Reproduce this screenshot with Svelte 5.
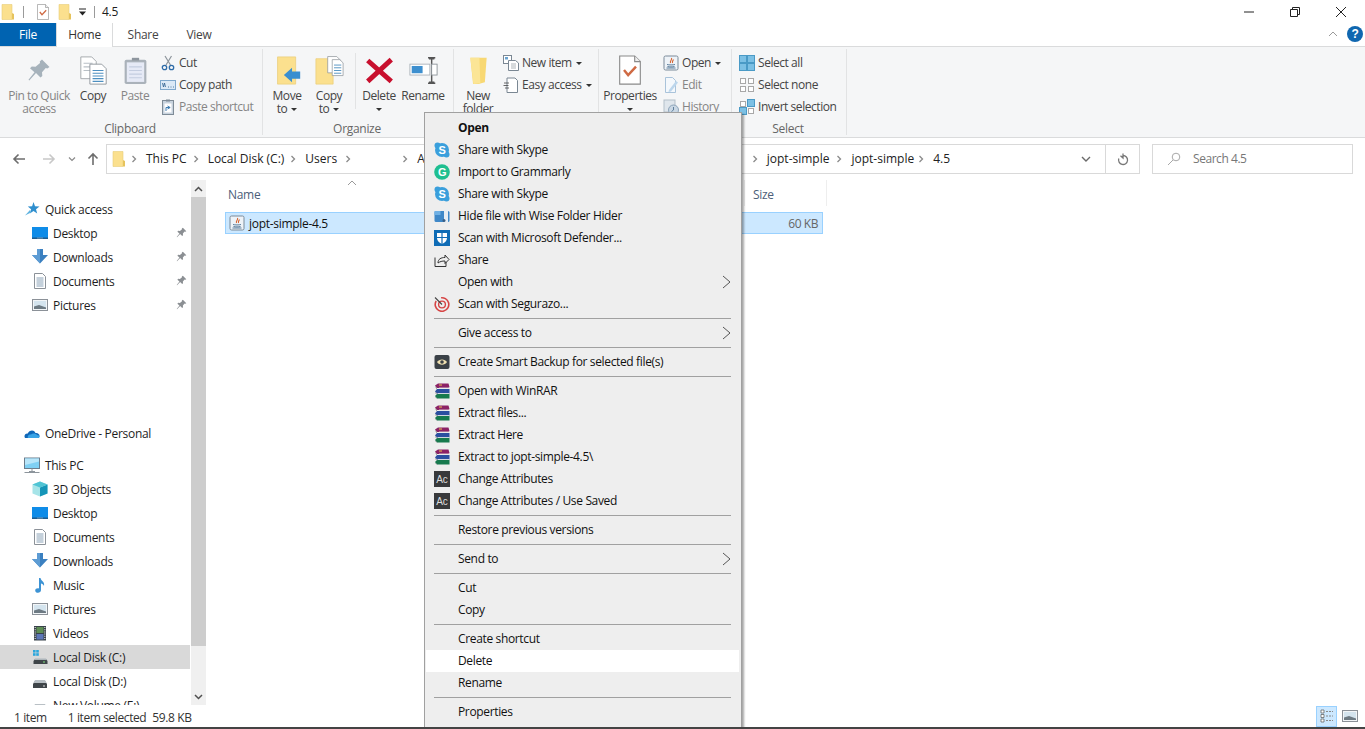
<script>
	const quick = [
		{ label: 'Desktop', icon: 'desktop' },
		{ label: 'Downloads', icon: 'download' },
		{ label: 'Documents', icon: 'docs' },
		{ label: 'Pictures', icon: 'pics' }
	]
	const pc = [
		{ label: '3D Objects', icon: 'cube' },
		{ label: 'Desktop', icon: 'desktop' },
		{ label: 'Documents', icon: 'docs' },
		{ label: 'Downloads', icon: 'download' },
		{ label: 'Music', icon: 'music' },
		{ label: 'Pictures', icon: 'pics' },
		{ label: 'Videos', icon: 'videos' },
		{ label: 'Local Disk (C:)', icon: 'diskc', selected: true },
		{ label: 'Local Disk (D:)', icon: 'disk' },
		{ label: 'New Volume (E:)', icon: 'disk' }
	]
	const menu = [
		{ label: 'Open', bold: true },
		{ label: 'Share with Skype', icon: 'skype' },
		{ label: 'Import to Grammarly', icon: 'grammarly' },
		{ label: 'Share with Skype', icon: 'skype' },
		{ label: 'Hide file with Wise Folder Hider', icon: 'wise' },
		{ label: 'Scan with Microsoft Defender...', icon: 'defender' },
		{ label: 'Share', icon: 'share' },
		{ label: 'Open with', arrow: true },
		{ label: 'Scan with Segurazo...', icon: 'segurazo' },
		{ sep: true },
		{ label: 'Give access to', arrow: true },
		{ sep: true },
		{ label: 'Create Smart Backup for selected file(s)', icon: 'backup' },
		{ sep: true },
		{ label: 'Open with WinRAR', icon: 'rar' },
		{ label: 'Extract files...', icon: 'rar' },
		{ label: 'Extract Here', icon: 'rar' },
		{ label: 'Extract to jopt-simple-4.5\\', icon: 'rar' },
		{ label: 'Change Attributes', icon: 'ac' },
		{ label: 'Change Attributes / Use Saved', icon: 'ac' },
		{ sep: true },
		{ label: 'Restore previous versions' },
		{ sep: true },
		{ label: 'Send to', arrow: true },
		{ sep: true },
		{ label: 'Cut' },
		{ label: 'Copy' },
		{ sep: true },
		{ label: 'Create shortcut' },
		{ label: 'Delete', hover: true },
		{ label: 'Rename' },
		{ sep: true },
		{ label: 'Properties' }
	]
</script>

{#snippet icon(name, size = 16)}
	<svg width={size} height={size} viewBox="0 0 16 16" class="ico">
		{#if name === 'folder'}
			<path d="M2 .5h10v15H2z" fill="#fbe08e" stroke="#e8cc78" stroke-width=".6"/>
			<path d="M12 9l2 1v5.500h-2z" fill="#e6c35c"/>
		{:else if name === 'checkdoc'}
			<path d="M2.500 .5h8l3 3v12h-11z" fill="#fff" stroke="#8a8a8a" stroke-width=".6"/>
			<path d="M10.500 .5v3h3" fill="#eee" stroke="#8a8a8a" stroke-width=".6"/>
			<path d="M4.800 8l2.200 2.700 4.200-4.500" fill="none" stroke="#cf6a44" stroke-width="1.300"/>
		{:else if name === 'pin'}
			<path d="M10 1l5 5-1.500 1-1-.3-2.500 2.800.2 2.500-1.200 1L6 10l-4.500 5L1 14.500 5 9.500 2 6.800l1.200-1.200 2.500.2 3-2.500-.2-1z" fill="#a6b2bb"/>
		{:else if name === 'pinsmall'}
			<path d="M10 1l5 5-1.500 1-1-.3-2.500 2.800.2 2.500-1.200 1L6 10l-4.500 5L1 14.500 5 9.500 2 6.800l1.200-1.200 2.500.2 3-2.500-.2-1z" fill="#8b8f93"/>
		{:else if name === 'copy'}
			<path d="M1 .5h6l2.500 2.500v9.500H1z" fill="#fff" stroke="#a0a4a8" stroke-width=".5"/>
			<path d="M2.500 4h5M2.500 6h5M2.500 8h5" stroke="#b9c0c6" stroke-width=".6"/>
			<path d="M6 4.500h6.500l2.500 2.500v8.500H6z" fill="#fff" stroke="#8d949a" stroke-width=".5"/>
			<path d="M7.500 8h6M7.500 9.500h6M7.500 11h6M7.500 12.500h6M7.500 14h6" stroke="#4d8fc0" stroke-width=".6"/>
		{:else if name === 'paste'}
			<rect x="2" y="2" width="12" height="13.500" rx="1" fill="#aab2ba"/>
			<rect x="3.200" y="3.500" width="9.600" height="10.800" fill="#e6eaf6"/>
			<path d="M4.500 6h7M4.500 8h7M4.500 10h7M4.500 12h7" stroke="#c4cde0" stroke-width=".6"/>
			<path d="M6 2.500h4V1H6z" fill="#8e969e"/>
		{:else if name === 'scissors'}
			<path d="M5 1l5.500 9M11.500 1L6 10" stroke="#8d959c" stroke-width="1.200"/>
			<circle cx="4.500" cy="12.500" r="2.200" fill="none" stroke="#2f6ca8" stroke-width="1.300"/>
			<circle cx="11.500" cy="12.500" r="2.200" fill="none" stroke="#2f6ca8" stroke-width="1.300"/>
		{:else if name === 'copypath'}
			<rect x=".5" y="3.500" width="15" height="9" fill="#dbe9f6" stroke="#7fa8cc"/>
			<path d="M2.500 6l1 4 1-4 1 4M8 10h1M10.500 10h1M13 10h1" stroke="#2e5f8e" fill="none" stroke-width=".8"/>
		{:else if name === 'pasteshortcut'}
			<rect x="2.500" y="1.500" width="11" height="14" fill="#c8d3de" stroke="#7e8b97"/>
			<rect x="4.500" y="4.500" width="7" height="9" fill="#fff"/>
			<path d="M6 12V8.500h4M7.500 7l2.700 1.500L7.500 10" fill="none" stroke="#3f7db2"/>
			<rect x="6" y=".5" width="4" height="2" fill="#7e8b97"/>
		{:else if name === 'moveto'}
			<path d="M2.500 .5h10v15H2.500z" fill="#fbe08e" stroke="#eacd78" stroke-width=".4"/>
			<path d="M6 10.500l4.500-4v2H15v4h-4.500v2z" fill="#3a8fd0"/>
		{:else if name === 'copyto'}
			<path d="M.5 1.500h9.500v14H.5z" fill="#fbe08e" stroke="#eacd78" stroke-width=".4"/>
			<path d="M7 .3h5l2 2v7H7z" fill="#fff" stroke="#8d949a" stroke-width=".4"/>
			<path d="M9.500 2h4.200l1.800 1.800v7H9.500z" fill="#fff" stroke="#8d949a" stroke-width=".4"/>
			<path d="M10.500 5h4M10.500 6.500h4M10.500 8h4M10.500 9.500h4" stroke="#4d8fc0" stroke-width=".5"/>
		{:else if name === 'delete'}
			<path d="M1.500 2.500L14.500 14M14.500 2L1.500 14" stroke="#c8102e" stroke-width="2.700"/>
		{:else if name === 'rename'}
			<rect x=".5" y="4.500" width="11" height="6" fill="#fff" stroke="#aab2ba" stroke-width=".5"/>
			<rect x="1.500" y="5.500" width="6" height="4" fill="#3d8fcf"/>
			<path d="M11 1.500h3M12.500 1.500v13M11 14.500h3" stroke="#555" stroke-width=".8" fill="none"/>
			<path d="M10.500 1h4M10.500 15h4" stroke="#555" stroke-width=".8"/>
			<rect x="12.500" y="4.500" width="3" height="6" fill="#fff" stroke="#8d949a" stroke-width=".5"/>
		{:else if name === 'newfolder'}
			<path d="M3.500 1h9l-1 13.500-3.500 1H5z" fill="#f8d873"/>
			<path d="M3.500 1h5l.5 14-3.800.5z" fill="#fbe596"/>
		{:else if name === 'newitem'}
			<rect x=".5" y=".5" width="8" height="8" fill="#fff" stroke="#7a8793"/>
			<rect x="2" y="2" width="3" height="2.500" fill="#6aa3d0"/>
			<path d="M5.500 5.500h7l3 2.500v7.500h-10z" fill="#fff" stroke="#7a8793"/>
			<path d="M8 9h5M8 11h5M8 13h5" stroke="#8d959c" stroke-width=".7"/>
		{:else if name === 'easyaccess'}
			<path d="M4 1h8l2.500 2.500v12H4z" fill="#fff" stroke="#7a8793"/>
			<path d="M1 6h5M.5 8.500h5M2 11h4" stroke="#444" stroke-width=".8"/>
		{:else if name === 'java'}
			<rect x="1" y="1" width="14" height="14" rx="1.500" fill="#eef3f8" stroke="#7b8a99"/>
			<path d="M8.500 3c1 2-2 2.500-1 5M10.500 4.500c-1 1.500-1.500 2-1 3.500" fill="none" stroke="#d5622e" stroke-width="1.100"/>
			<path d="M4 9.500c2 .6 6 .6 8 0M4.500 11.500c2 .5 5 .5 7 0M3.500 13h9" fill="none" stroke="#4a6f91" stroke-width=".9"/>
		{:else if name === 'edit'}
			<path d="M2.500 .5h7l3 3v12h-10z" fill="#f4f8fc" stroke="#a9c3da"/>
			<path d="M6 13l7-9 2 1.500-7 9-2.500.5z" fill="#bcd6ec"/>
		{:else if name === 'history'}
			<rect x="1" y="1" width="11" height="12" fill="#dfe6ec" stroke="#b4bfc9"/>
			<circle cx="10.500" cy="11" r="5" fill="#c9d7e4" stroke="#8da4b9"/>
			<path d="M10.500 8v3l-2 1.500" stroke="#5f7f9c" fill="none"/>
		{:else if name === 'selectall'}
			<rect x=".5" y=".5" width="7" height="7" fill="#7cc0e4" stroke="#4a9ac6"/>
			<rect x="8.500" y=".5" width="7" height="7" fill="#7cc0e4" stroke="#4a9ac6"/>
			<rect x=".5" y="8.500" width="7" height="7" fill="#7cc0e4" stroke="#4a9ac6"/>
			<rect x="8.500" y="8.500" width="7" height="7" fill="#7cc0e4" stroke="#4a9ac6"/>
		{:else if name === 'selectnone'}
			<rect x="1.500" y="1.500" width="5" height="5" fill="#fff" stroke="#a8a8a8"/>
			<rect x="9.500" y="1.500" width="5" height="5" fill="#fff" stroke="#a8a8a8"/>
			<rect x="1.500" y="9.500" width="5" height="5" fill="#fff" stroke="#a8a8a8"/>
			<rect x="9.500" y="9.500" width="5" height="5" fill="#fff" stroke="#a8a8a8"/>
		{:else if name === 'invert'}
			<rect x="1.500" y="2.500" width="5" height="5" fill="#fff" stroke="#a8a8a8"/>
			<rect x="8.500" y=".5" width="7" height="7" fill="#7cc0e4" stroke="#4a9ac6"/>
			<rect x=".5" y="8.500" width="7" height="7" fill="#7cc0e4" stroke="#4a9ac6"/>
			<rect x="9.500" y="9.500" width="5" height="5" fill="#fff" stroke="#a8a8a8"/>
		{:else if name === 'star'}
			<path d="M9.500 1l1.500 4.300 4.500.2-3.500 2.700 1.200 4.300-3.700-2.500-3.700 2.500 1.300-4.300L3.800 5.500l4.300-.2z" fill="#2f8fce"/>
			<path d="M6 9L1 14.500l6-3z" fill="#5fb3e0"/>
		{:else if name === 'desktop'}
			<rect y="2" width="16" height="12" fill="#0f8ce8"/>
			<rect y="12.500" width="16" height="1.500" fill="#1f5d8f"/>
			<path d="M5 13h6" stroke="#ccc" stroke-width=".5"/>
		{:else if name === 'download'}
			<path d="M5 0h6v6h5l-8 8.500L0 6h5z" fill="#3b80c0"/>
			<path d="M0 6h5V0h3v14.500z" fill="#5d9cd4"/>
		{:else if name === 'docs'}
			<path d="M2.500 .5h8l3 3v12h-11z" fill="#fff" stroke="#8b9198"/>
			<path d="M4.500 5h7M4.500 7h7M4.500 9h7M4.500 11h7M4.500 13h7" stroke="#6d8aa5" stroke-width=".8"/>
		{:else if name === 'pics'}
			<rect x=".5" y="2.500" width="15" height="11" fill="#f2f5f7" stroke="#8b9198"/>
			<rect x="2" y="4" width="12" height="8" fill="#d4e4ee"/>
			<path d="M2 9.500l5-1.500 7 2.500V12H2z" fill="#6d7a83"/>
		{:else if name === 'onedrive'}
			<path d="M1 13c-1.500-2.500.5-5 2.800-4.500C5 5 10 4 11.500 8c2.500-.5 4.500 1.500 4 3.500-.2 1-1 1.500-2 1.500z" fill="#1067b8"/>
			<path d="M4 13c-1-2 1-4 3-3.500C8.500 8 12 8 13 10c1.500 0 2.500.8 2.500 1.800 0 .8-.8 1.200-2 1.200z" fill="#38a3e6"/>
		{:else if name === 'pc'}
			<rect x=".5" y="1" width="15" height="10.500" fill="#7fd0f4" stroke="#6b7d8c"/>
			<path d="M1 1.500h14v3L1 8z" fill="#b8e6fa"/>
			<path d="M5 14.500h6M8 11.500v3M.5 15.500h15" stroke="#8d959c"/>
		{:else if name === 'cube'}
			<path d="M8 .5l7.500 3v9L8 15.500.5 12.500v-9z" fill="#a6e4e8"/>
			<path d="M8 6.500l7.500-3v9L8 15.500z" fill="#1595b8"/>
			<path d="M8 .5l7.500 3L8 6.500.5 3.500z" fill="#50c4d4"/>
		{:else if name === 'music'}
			<path d="M7 1h1.500c.5 3 4.500 3.500 3.500 8-.5-1.500-2-2.500-3-2.500V13c0 1.800-1.500 2.800-3 2.800S3.200 15 3.200 13.500 5 11 7 11.500z" fill="#3d93d4"/>
		{:else if name === 'videos'}
			<rect x="2" y="1" width="12" height="14.500" fill="#39424a"/>
			<rect x="4.500" y="2" width="7" height="6" fill="#5e8d55"/>
			<rect x="4.500" y="9" width="7" height="5.500" fill="#5d76b8"/>
			<path d="M3.200 2v12.500M12.800 2v12.500" stroke="#ddd" stroke-width="1.200" stroke-dasharray="1 1.200"/>
		{:else if name === 'diskc'}
			<rect x="1" y="1" width="2.600" height="2.600" fill="#2aa6dc"/>
			<rect x="4.200" y="1" width="2.600" height="2.600" fill="#2aa6dc"/>
			<rect x="1" y="4.200" width="2.600" height="2.600" fill="#2aa6dc"/>
			<rect x="4.200" y="4.200" width="2.600" height="2.600" fill="#2aa6dc"/>
			<path d="M3 10h11l1.500 2v3H1.500v-3z" fill="#3f4549"/>
			<path d="M3 9.500h11l1 1.500H2z" fill="#aeb6bb"/>
			<rect x="11" y="12.500" width="2" height="1" fill="#7fe07f"/>
		{:else if name === 'disk'}
			<path d="M3 8h10l2 3v4H1v-4z" fill="#3f4549"/>
			<path d="M3 7h10l1.500 3h-13z" fill="#b9c0c5"/>
			<rect x="11" y="12.500" width="2" height="1" fill="#ddd"/>
		{:else if name === 'skype'}
			<circle cx="8" cy="8" r="7" fill="#3a9fdc"/>
			<circle cx="3.500" cy="3.500" r="3" fill="#3a9fdc"/>
			<circle cx="12.500" cy="12.500" r="3" fill="#3a9fdc"/>
			<text x="8" y="12" text-anchor="middle" class="ig">S</text>
		{:else if name === 'grammarly'}
			<circle cx="8" cy="8" r="7.800" fill="#1fbf90"/>
			<text x="8" y="12" text-anchor="middle" class="ig">G</text>
		{:else if name === 'wise'}
			<rect x=".5" y="3" width="15" height="11" rx="1.500" fill="#3f88c8"/>
			<path d="M.5 3h6v4h-6z" fill="#6fb0e4"/>
			<rect x="10" y="1.500" width="4" height="13" fill="#e8eef4"/>
			<circle cx="10" cy="12.500" r="1.500" fill="#3a5f85"/>
		{:else if name === 'defender'}
			<rect width="16" height="16" fill="#0f6cb6"/>
			<path d="M3 3h10v5c0 3-2.500 5-5 6-2.500-1-5-3-5-6z" fill="#fff"/>
			<path d="M8 3v11M3 7.500h10" stroke="#0f6cb6" stroke-width="1.200"/>
		{:else if name === 'share'}
			<path d="M1 5.500v9h11V10M4 11c0-4 3-5.500 7-5.500V3l4 4.500-4 4V9c-3 0-5 .5-7 2z" fill="none" stroke="#333" stroke-width="1"/>
		{:else if name === 'segurazo'}
			<circle cx="8" cy="8.500" r="6.800" fill="none" stroke="#d64545" stroke-width="1.600" stroke-dasharray="32 6" transform="rotate(-60 8 8.500)"/>
			<circle cx="8" cy="8.500" r="3.400" fill="none" stroke="#d64545" stroke-width="1.400"/>
			<path d="M1 1.500l7 7" stroke="#444" stroke-width="1.100"/>
		{:else if name === 'backup'}
			<rect x=".5" y="1" width="15" height="14" rx="2" fill="#3a4046"/>
			<path d="M3 8c2-3.500 8-3.500 10 0-2 3.500-8 3.500-10 0z" fill="#f0e0b0"/>
			<circle cx="8" cy="8" r="1.800" fill="#3a4046"/>
		{:else if name === 'rar'}
			<path d="M4 .5h10.500l1 3.500-1 1H3L1 2.500z" fill="#8c2266"/>
			<path d="M3 6h12.500v4.500H3L1 8.500z" fill="#2b4fa0"/>
			<path d="M3 11h12.500v4.500H3L1 13z" fill="#177a4e"/>
			<path d="M1.500 3.500L3 5M1.500 4.500L3 6M1.500 9L3 10.500M1.500 10L3 11.500M1.500 14L3 15.500" stroke="#777" stroke-width=".6"/>
			<path d="M5 5h10M4 10.500h11" stroke="#e4e4e4" stroke-width=".8"/>
			<path d="M5 2h3" stroke="#e9c34a" stroke-width="1"/>
		{:else if name === 'ac'}
			<rect width="16" height="16" fill="#38393b"/>
			<text x="8" y="12" text-anchor="middle" class="iac">Ac</text>
		{/if}
	</svg>
{/snippet}

{#snippet big(name, lines, size, w, caret = false, off = false)}
	<div class="big" class:off style="width: {w}px">
		<div class="bigico">{@render icon(name, size)}</div>
		<div class="bigtxt">
			{#each lines as l, i}
				<div>{l}{#if caret && i === lines.length - 1 && lines.length > 1}<i class="caret"></i>{/if}</div>
			{/each}
			{#if caret && lines.length === 1}<div><i class="caret solo"></i></div>{/if}
		</div>
	</div>
{/snippet}

{#snippet small(name, label, caret = false, off = false)}
	<div class="small" class:off>
		{@render icon(name, 16)}
		<span>{label}</span>
		{#if caret}<i class="caret"></i>{/if}
	</div>
{/snippet}

{#snippet chev(cls = '')}
	<svg class="chev {cls}" width="6" height="8" viewBox="0 0 6 8"><path d="M1.500 1l3 3-3 3" fill="none" stroke="#8a8a8a" stroke-width="1.300"/></svg>
{/snippet}

<div class="win">
	<header class="title">
		<span class="qa first">{@render icon('folder', 16)}</span>
		<b class="vline"></b>
		<span class="qa doc">{@render icon('checkdoc', 16)}</span>
		<span class="qa fold2">{@render icon('folder', 16)}</span>
		<svg class="qadrop" width="7" height="8" viewBox="0 0 7 8"><path d="M0 1h7" stroke="#222"/><path d="M0 3.500h7L3.500 7.500z" fill="#222"/></svg>
		<b class="vline two"></b>
		<span class="wintitle">4.5</span>
		<div class="ctrls">
			<svg width="12" height="12" viewBox="0 0 12 12"><path d="M1 6h10" stroke="#222"/></svg>
			<svg width="12" height="12" viewBox="0 0 12 12"><path d="M1.500 3.500h7v7h-7zM3.500 3.500v-2h7v7h-2" fill="none" stroke="#222"/></svg>
			<svg width="12" height="12" viewBox="0 0 12 12"><path d="M1 1l10 10M11 1L1 11" stroke="#222"/></svg>
		</div>
	</header>

	<nav class="tabs">
		<div class="tab file">File</div>
		<div class="tab home">Home</div>
		<div class="tab share">Share</div>
		<div class="tab view">View</div>
		<svg class="collapse" width="10" height="6" viewBox="0 0 10 6"><path d="M1 5l4-4 4 4" fill="none" stroke="#9a9a9a"/></svg>
		<div class="help">?</div>
	</nav>

	<section class="ribbon">
		<div class="group g1">
			<div class="row">
				{@render big('pin', ['Pin to Quick', 'access'], 24, 62, false, true)}
				{@render big('copy', ['Copy'], 29, 46)}
				{@render big('paste', ['Paste'], 29, 38, false, true)}
				<div class="stack">
					{@render small('scissors', 'Cut')}
					{@render small('copypath', 'Copy path')}
					{@render small('pasteshortcut', 'Paste shortcut', false, true)}
				</div>
			</div>
			<div class="glabel">Clipboard</div>
		</div>
		<div class="group g2">
			<div class="row">
				{@render big('moveto', ['Move', 'to'], 29, 42, true)}
				{@render big('copyto', ['Copy', 'to'], 29, 42, true)}
				<b class="rsep"></b>
				{@render big('delete', ['Delete'], 29, 42, true)}
				{@render big('rename', ['Rename'], 29, 46)}
			</div>
			<div class="glabel">Organize</div>
		</div>
		<div class="group g3">
			<div class="row">
				{@render big('newfolder', ['New', 'folder'], 29, 44)}
				<div class="stack">
					{@render small('newitem', 'New item', true)}
					{@render small('easyaccess', 'Easy access', true)}
				</div>
			</div>
			<div class="glabel">New</div>
		</div>
		<div class="group g4">
			<div class="row">
				{@render big('checkdoc', ['Properties'], 30, 54, true)}
				<div class="stack">
					{@render small('java', 'Open', true)}
					{@render small('edit', 'Edit', false, true)}
					{@render small('history', 'History', false, true)}
				</div>
			</div>
			<div class="glabel">Open</div>
		</div>
		<div class="group g5">
			<div class="row">
				<div class="stack">
					{@render small('selectall', 'Select all')}
					{@render small('selectnone', 'Select none')}
					{@render small('invert', 'Invert selection')}
				</div>
			</div>
			<div class="glabel">Select</div>
		</div>
		<div class="rest"></div>
	</section>

	<section class="addr">
		<div class="arrows">
			<svg width="14" height="12" viewBox="0 0 14 12"><path d="M13 6H2M6.500 1.500L2 6l4.500 4.500" fill="none" stroke="#6d6d6d" stroke-width="1.600"/></svg>
			<svg class="fw" width="14" height="12" viewBox="0 0 14 12"><path d="M1 6h11M7.500 1.500L12 6l-4.500 4.500" fill="none" stroke="#c8c8c8" stroke-width="1.600"/></svg>
			<svg class="dn" width="8" height="6" viewBox="0 0 8 6"><path d="M1 1.500l3 3 3-3" fill="none" stroke="#8a8a8a" stroke-width="1.200"/></svg>
			<svg class="up" width="12" height="14" viewBox="0 0 12 14"><path d="M6 13V2M1.500 6.500L6 2l4.500 4.500" fill="none" stroke="#6d6d6d" stroke-width="1.600"/></svg>
		</div>
		<div class="path">
			<span class="pfold">{@render icon('folder', 16)}</span>
			{@render chev('c1')}<span class="cr">This PC</span>
			{@render chev('c2')}<span class="cr">Local Disk (C:)</span>
			{@render chev('c2')}<span class="cr">Users</span>
			{@render chev('c4')}
			{@render chev('c5')}<span class="cr">A</span>
			<span class="gap"></span>
			{@render chev()}<span class="cr">jopt-simple</span>
			{@render chev()}<span class="cr">jopt-simple</span>
			{@render chev('c8')}<span class="cr">4.5</span>
			<svg class="pdrop" width="10" height="7" viewBox="0 0 10 7"><path d="M1 1l4 4 4-4" fill="none" stroke="#6a6a6a" stroke-width="1.400"/></svg>
			<div class="refresh">
				<svg width="12" height="13" viewBox="0 0 12 13"><path d="M6 2.500a4.500 4.500 0 1 1-4.200 3M6 .5v4.500L3.500 2.700" fill="none" stroke="#777" stroke-width="1.300"/></svg>
			</div>
		</div>
		<div class="search">
			<svg width="14" height="14" viewBox="0 0 14 14"><circle cx="9" cy="5" r="3.800" fill="none" stroke="#a8a8a8"/><path d="M6 8l-5 5" stroke="#a8a8a8"/></svg>
			<span>Search 4.5</span>
		</div>
	</section>

	<main class="body">
		<aside class="navpane">
			<div class="navrow top first">{@render icon('star', 16)}<span>Quick access</span></div>
			{#each quick as q}
				<div class="navrow">
					{@render icon(q.icon, 16)}<span>{q.label}</span>
					<em class="pinned">{@render icon('pinsmall', 11)}</em>
				</div>
			{/each}
			<div class="navrow top drive">{@render icon('onedrive', 16)}<span>OneDrive - Personal</span></div>
			<div class="navrow top thispc">{@render icon('pc', 16)}<span>This PC</span></div>
			{#each pc as p}
				<div class="navrow" class:selected={p.selected}>{@render icon(p.icon, 16)}<span>{p.label}</span></div>
			{/each}
		</aside>
		<div class="scroll">
			<div class="sbtn"><svg width="9" height="6" viewBox="0 0 9 6"><path d="M1 5l3.500-3.500L8 5" fill="none" stroke="#505050" stroke-width="1.500"/></svg></div>
			<div class="thumb"></div>
			<div class="track"></div>
			<div class="sbtn"><svg width="9" height="6" viewBox="0 0 9 6"><path d="M1 1l3.500 3.500L8 1" fill="none" stroke="#505050" stroke-width="1.500"/></svg></div>
		</div>
		<div class="list">
			<div class="head">
				<div class="hname">Name
					<svg class="sort" width="10" height="6" viewBox="0 0 10 6"><path d="M1 5l4-4 4 4" fill="none" stroke="#9a9a9a"/></svg>
				</div>
				<div class="hsize">Size</div>
			</div>
			<div class="filerow">
				{@render icon('java', 16)}
				<span class="fname">jopt-simple-4.5</span>
				<span class="fsize">60 KB</span>
			</div>
		</div>
	</main>

	<footer class="status">
		<span class="s1">1 item</span>
		<span class="s2">1 item selected</span>
		<span class="s3">59.8 KB</span>
		<div class="views">
			<span class="vbtn on">
				<svg width="16" height="16" viewBox="0 0 16 16"><path d="M2 2h3v3H2zM2 6.500h3v3H2zM2 11h3v3H2z" fill="#fff" stroke="#555" stroke-width=".7"/><path d="M7 3.500h7M7 8h7M7 12.500h7" stroke="#888" stroke-dasharray="2 1"/></svg>
			</span>
			<span class="vbtn">{@render icon('pics', 16)}</span>
		</div>
	</footer>

	<div class="menu">
		{#each menu as m}
			{#if m.sep}
				<div class="msep"></div>
			{:else}
				<div class="mitem" class:hover={m.hover} class:bold={m.bold}>
					<span class="micon">{#if m.icon}{@render icon(m.icon, 16)}{/if}</span>
					<span>{m.label}</span>
					{#if m.arrow}
						<svg class="marrow" width="9" height="14" viewBox="0 0 9 14"><path d="M1 1l7 6-7 6" fill="none" stroke="#555"/></svg>
					{/if}
				</div>
			{/if}
		{/each}
	</div>
</div>

<style>
	:global(body) {
		margin: 0;
		background: #fff;
	}
	.win {
		position: relative;
		display: flex;
		flex-direction: column;
		width: 1365px;
		height: 729px;
		overflow: hidden;
		background: #fff;
		color: #1e1e1e;
		font: 12px/16px "Open Sans", "Noto Sans", sans-serif;
		letter-spacing: -.3px;
		border-bottom: 2px solid #444;
		box-sizing: border-box;
	}
	.ico {
		display: block;
		flex: none;
	}
	.ig {
		font: bold 11px "Liberation Sans", sans-serif;
		fill: #fff;
	}
	.iac {
		font: 10px "Liberation Sans", sans-serif;
		fill: #ddd;
		letter-spacing: 0;
	}

	.title {
		display: flex;
		align-items: center;
		height: 23px;
		flex: none;
	}
	.qa {
		display: block;
	}
	.vline {
		width: 1px;
		height: 12px;
		margin-left: 7px;
		background: #9a9a9a;
	}
	.vline.two {
		margin-left: 8px;
	}
	.doc {
		margin-left: 11px;
	}
	.fold2 {
		margin-left: 6px;
	}
	.qadrop {
		margin-left: 6px;
	}
	.wintitle {
		margin-left: 7px;
	}
	.ctrls {
		display: flex;
		gap: 34px;
		margin-left: auto;
		padding-right: 18px;
	}

	.tabs {
		position: relative;
		display: flex;
		height: 24px;
		flex: none;
		box-sizing: border-box;
		border-bottom: 1px solid #dadbdc;
	}
	.tab {
		height: 23px;
		line-height: 24px;
		text-align: center;
		color: #444;
	}
	.file {
		width: 56px;
		background: #0063b1;
		color: #fff;
	}
	.home {
		width: 57px;
		height: 24px;
		box-sizing: border-box;
		background: #fff;
		border: 1px solid #dadbdc;
		border-bottom: none;
		border-top: none;
		color: #333;
		line-height: 23px;
	}
	.share {
		width: 60px;
	}
	.view {
		width: 52px;
	}
	.collapse {
		margin: 8px 0 0 auto;
	}
	.help {
		width: 16px;
		height: 16px;
		margin: 3px 2px 0 9px;
		border-radius: 50%;
		background: #1067b0;
		color: #fff;
		font: bold 12px/16px "Liberation Sans", sans-serif;
		text-align: center;
	}

	.ribbon {
		display: flex;
		height: 91px;
		flex: none;
		box-sizing: border-box;
		background: #f5f6f7;
		border-bottom: 1px solid #dadbdc;
		color: #444;
		letter-spacing: -.45px;
	}
	.group {
		position: relative;
		display: flex;
		flex-direction: column;
		box-sizing: border-box;
		height: 86px;
		margin-top: 2px;
		border-right: 1px solid #e2e3e4;
	}
	.g1 { width: 263px; padding-left: 8px; }
	.g2 { width: 191px; padding-left: 3px; }
	.g3 { width: 145px; padding-left: 2px; }
	.g4 { width: 133px; padding-left: 4px; }
	.g5 { width: 115px; padding-left: 7px; }
	.rest {
		flex: 1;
	}
	.row {
		display: flex;
		height: 72px;
	}
	.glabel {
		position: absolute;
		left: 0;
		right: 2px;
		top: 72px;
		text-align: center;
		color: #666;
		letter-spacing: -.3px;
	}
	.big {
		display: flex;
		flex-direction: column;
		align-items: center;
		flex: none;
		padding-top: 4px;
		box-sizing: border-box;
		line-height: 13px;
	}
	.bigico {
		display: flex;
		align-items: center;
		justify-content: center;
		height: 34px;
		margin-bottom: 2px;
	}
	.bigtxt {
		text-align: center;
		white-space: nowrap;
	}
	.off {
		color: #858585;
	}
	.caret {
		display: inline-block;
		margin-left: 4px;
		vertical-align: 2px;
		border: 3px solid transparent;
		border-top: 3px solid #333;
		border-bottom: none;
	}
	.caret.solo {
		margin-left: 0;
	}
	.rsep {
		width: 1px;
		height: 56px;
		margin: 4px 2px 0 5px;
		background: #e2e3e4;
	}
	.stack {
		display: flex;
		flex-direction: column;
		padding-top: 3px;
		margin-left: 6px;
	}
	.g3 .stack { margin-left: 3px; }
	.g4 .stack { margin-left: 6px; }
	.g5 .stack { margin-left: 0; }
	.small {
		display: flex;
		align-items: center;
		gap: 3px;
		height: 22px;
		white-space: nowrap;
	}
	.small .caret {
		margin-left: 1px;
	}

	.addr {
		position: relative;
		display: flex;
		height: 42px;
		flex: none;
		box-sizing: border-box;
		padding-top: 6px;
	}
	.arrows {
		display: flex;
		align-items: center;
		width: 106px;
		height: 30px;
		padding-left: 12px;
		box-sizing: border-box;
		flex: none;
	}
	.fw { margin-left: 16px; }
	.dn { margin-left: 12px; }
	.up { margin-left: 11px; }
	.path {
		display: flex;
		align-items: center;
		width: 1034px;
		height: 30px;
		box-sizing: border-box;
		border: 1px solid #d9d9d9;
		flex: none;
		color: #222;
		letter-spacing: 0;
	}
	.pfold { margin-left: 4px; }
	.chev { flex: none; margin-left: 7px; }
	.chev.c1 { margin-left: 4px; }
	.chev.c2 { margin-left: 6px; }
	.chev.c4 { margin-left: 8px; }
	.chev.c5 { margin-left: 51px; }
	.chev.c8 { margin-left: 4px; }
	.cr { white-space: nowrap; margin-left: 9px; }
	.gap { width: 320px; flex: none; }
	.pdrop { margin-left: auto; margin-right: 14px; }
	.refresh {
		display: flex;
		align-items: center;
		justify-content: center;
		width: 33px;
		height: 100%;
		flex: none;
		border-left: 1px solid #d9d9d9;
	}
	.search {
		display: flex;
		align-items: center;
		gap: 12px;
		width: 201px;
		height: 30px;
		margin-left: 12px;
		padding-left: 14px;
		box-sizing: border-box;
		border: 1px solid #d9d9d9;
		color: #777;
		letter-spacing: -.45px;
	}

	.body {
		display: flex;
		flex: 1;
		min-height: 0;
	}
	.navpane {
		width: 191px;
		flex: none;
		overflow: hidden;
		padding-top: 17px;
		box-sizing: border-box;
	}
	.navrow {
		position: relative;
		display: flex;
		align-items: center;
		gap: 5px;
		height: 24px;
		padding-left: 32px;
		white-space: nowrap;
		box-sizing: border-box;
		width: 190px;
	}
	.navrow span {
		padding-top: 2px;
	}
	.navrow.top {
		padding-left: 24px;
	}
	.navrow.selected {
		background: #d9d9d9;
	}
	.drive {
		margin-top: 104px;
	}
	.thispc {
		margin-top: 8px;
	}
	.pinned {
		position: absolute;
		left: 176px;
		top: 6px;
	}
	.scroll {
		display: flex;
		flex-direction: column;
		width: 15px;
		flex: none;
		background: #f0f0f0;
	}
	.sbtn {
		display: flex;
		align-items: center;
		justify-content: center;
		height: 17px;
		flex: none;
	}
	.thumb {
		height: 449px;
		flex: none;
		background: #cdcdcd;
	}
	.track {
		flex: 1;
	}
	.list {
		flex: 1;
		padding-left: 19px;
		min-width: 0;
	}
	.head {
		display: flex;
		height: 32px;
		color: #4c607a;
	}
	.hname {
		position: relative;
		width: 520px;
		padding-left: 3px;
		padding-top: 7px;
		box-sizing: border-box;
		border-right: 1px solid #eee;
		height: 26px;
	}
	.sort {
		position: absolute;
		left: 122px;
		top: 0;
	}
	.hsize {
		width: 82px;
		padding-left: 8px;
		padding-top: 7px;
		box-sizing: border-box;
		border-right: 1px solid #eee;
		height: 26px;
	}
	.filerow {
		display: flex;
		align-items: center;
		width: 598px;
		height: 22px;
		padding: 0 4px 0 3px;
		box-sizing: border-box;
		background: #cce8ff;
		border: 1px solid #99d1ff;
		color: #111;
	}
	.fname {
		margin-left: 4px;
		padding-top: 1px;
	}
	.fsize {
		margin-left: auto;
		padding-top: 1px;
		color: #666;
		letter-spacing: -.45px;
	}

	.status {
		display: flex;
		align-items: center;
		height: 22px;
		flex: none;
		padding: 3px 0 0 14px;
		box-sizing: border-box;
		color: #333;
		letter-spacing: -.4px;
	}
	.s2 { margin-left: 21px; }
	.s3 { margin-left: 6px; }
	.views {
		display: flex;
		align-items: center;
		margin-left: auto;
		margin-top: -3px;
		padding-right: 5px;
	}
	.vbtn {
		display: flex;
		align-items: center;
		justify-content: center;
		width: 21px;
		height: 21px;
		box-sizing: border-box;
		margin-left: 2px;
	}
	.vbtn.on {
		background: #cce8ff;
		border: 1px solid #99d1ff;
	}

	/* context menu sits over the window */
	.menu {
		position: absolute;
		left: 424px;
		top: 112px;
		width: 318px;
		height: 617px;
		box-sizing: border-box;
		padding: 4px 2px 0 1px;
		background: #eeeeee;
		border: 1px solid #a0a0a0;
		border-bottom: none;
		box-shadow: 2px 2px 2px rgba(0, 0, 0, .35);
		color: #111;
		letter-spacing: -.35px;
	}
	.mitem {
		position: relative;
		display: flex;
		align-items: center;
		height: 22px;
		padding-left: 8px;
		white-space: nowrap;
	}
	.mitem.hover {
		background: #fff;
	}
	.mitem.bold {
		font-weight: 700;
	}
	.micon {
		width: 24px;
		flex: none;
	}
	.marrow {
		position: absolute;
		right: 8px;
		top: 4px;
	}
	.msep {
		height: 1px;
		margin: 3px 8px;
		background: #a0a0a0;
	}
</style>
